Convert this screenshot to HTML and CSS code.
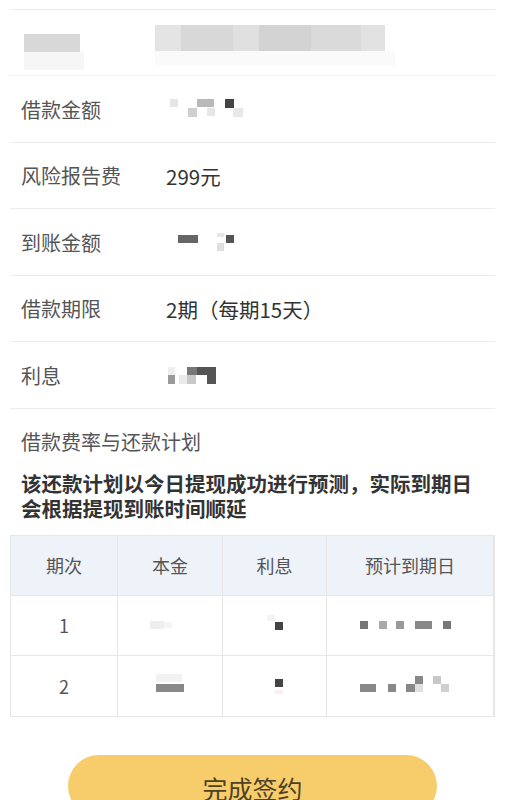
FILE: index.html
```html
<!DOCTYPE html>
<html lang="zh-CN">
<head>
<meta charset="utf-8">
<link rel="stylesheet" href="styles.css">
</head>
<body>
<div class="page">
  <div class="rows">
    <div class="row row-blur">
      <svg class="mz" width="240" height="60" viewBox="0 0 240 60">
        <rect x="0" y="22" width="56" height="18" fill="#d8d8d8"/>
        <rect x="0" y="40" width="60" height="18" fill="#f6f6f6"/>
      </svg>
      <svg class="mz2" width="240" height="40" viewBox="0 0 240 40">
        <rect x="0" y="0" width="26" height="26" fill="#e4e4e4"/>
        <rect x="26" y="0" width="52" height="26" fill="#d8d8d8"/>
        <rect x="78" y="0" width="26" height="26" fill="#e0e0e0"/>
        <rect x="104" y="0" width="52" height="26" fill="#d3d3d3"/>
        <rect x="156" y="0" width="50" height="26" fill="#dadada"/>
        <rect x="206" y="0" width="24" height="26" fill="#e2e2e2"/>
        <rect x="0" y="26" width="240" height="14" fill="#fafafa"/>
      </svg>
    </div>
    <div class="row">
      <span class="label">借款金额</span>
      <svg class="val-mz" width="80" height="22" viewBox="0 0 80 22">
        <rect x="4" y="0" width="8" height="8" fill="#e6e6e6"/>
        <rect x="31" y="0" width="17" height="8" fill="#b9b9b9"/>
        <rect x="59" y="0" width="9" height="9" fill="#444"/>
        <rect x="22" y="9" width="9" height="9" fill="#cfcfcf"/>
        <rect x="41" y="9" width="8" height="8" fill="#e6e6e6"/>
        <rect x="67" y="9" width="10" height="9" fill="#e8e8e8"/>
      </svg>
    </div>
    <div class="row">
      <span class="label">风险报告费</span>
      <span class="value">299元</span>
    </div>
    <div class="row">
      <span class="label">到账金额</span>
      <svg class="val-mz" width="80" height="22" viewBox="0 0 80 22">
        <rect x="12" y="3" width="20" height="8" fill="#666"/>
        <rect x="51" y="1" width="7" height="4" fill="#e6e6e6"/>
        <rect x="60" y="3" width="8" height="8" fill="#555"/>
        <rect x="51" y="11" width="7" height="8" fill="#e0e0e0"/>
      </svg>
    </div>
    <div class="row">
      <span class="label">借款期限</span>
      <span class="value">2期（每期15天）</span>
    </div>
    <div class="row">
      <span class="label">利息</span>
      <svg class="val-mz" width="80" height="22" viewBox="0 0 80 22">
        <rect x="2" y="2" width="7" height="8" fill="#eee"/>
        <rect x="2" y="10" width="7" height="9" fill="#999"/>
        <rect x="13" y="10" width="8" height="9" fill="#eaeaea"/>
        <rect x="21" y="2" width="10" height="8" fill="#777"/>
        <rect x="31" y="2" width="19" height="8" fill="#555"/>
        <rect x="21" y="10" width="9" height="9" fill="#c8c8c8"/>
        <rect x="41" y="10" width="9" height="9" fill="#555"/>
      </svg>
    </div>
  </div>

  <div class="section-title">借款费率与还款计划</div>
  <div class="notice">该还款计划以今日提现成功进行预测，实际到期日会根据提现到账时间顺延</div>

  <div class="table">
    <div class="cell head">期次</div>
    <div class="cell head">本金</div>
    <div class="cell head">利息</div>
    <div class="cell head">预计到期日</div>

    <div class="cell">1</div>
    <div class="cell">
      <svg width="40" height="12" viewBox="0 0 40 12"><rect x="0" y="2" width="14" height="8" fill="#eeeeee"/><rect x="14" y="3" width="8" height="6" fill="#f5f5f5"/></svg>
    </div>
    <div class="cell">
      <svg width="20" height="20" viewBox="0 0 20 20"><rect x="2" y="0" width="8" height="6" fill="#f3f3f3"/><rect x="10" y="7" width="8" height="8" fill="#444"/></svg>
    </div>
    <div class="cell">
      <svg width="100" height="14" viewBox="0 0 100 14"><rect x="0" y="3" width="8" height="8" fill="#777"/><rect x="19" y="3" width="8" height="8" fill="#aaa"/><rect x="36" y="3" width="8" height="8" fill="#999"/><rect x="55" y="3" width="17" height="8" fill="#888"/><rect x="83" y="3" width="8" height="8" fill="#777"/></svg>
    </div>

    <div class="cell">2</div>
    <div class="cell">
      <svg width="40" height="24" viewBox="0 0 40 24"><rect x="6" y="0" width="26" height="8" fill="#f2f2f2"/><rect x="6" y="10" width="28" height="8" fill="#888"/></svg>
    </div>
    <div class="cell">
      <svg width="20" height="20" viewBox="0 0 20 20"><rect x="10" y="3" width="8" height="8" fill="#444"/><rect x="10" y="14" width="8" height="4" fill="#fbeeee"/></svg>
    </div>
    <div class="cell">
      <svg width="100" height="24" viewBox="0 0 100 24"><rect x="0" y="10" width="16" height="8" fill="#888"/><rect x="28" y="10" width="8" height="8" fill="#888"/><rect x="46" y="10" width="9" height="8" fill="#888"/><rect x="55" y="2" width="8" height="8" fill="#888"/><rect x="73" y="2" width="8" height="8" fill="#c8c8c8"/><rect x="81" y="10" width="8" height="8" fill="#cfcfcf"/><rect x="55" y="10" width="8" height="8" fill="#e0e0e0"/></svg>
    </div>
  </div>

  <div class="btn-wrap">
    <div class="btn">完成签约</div>
  </div>
</div>
</body>
</html>
```
FILE: styles.css
```css
html, body {
  margin: 0;
  padding: 0;
  background: #ffffff;
}
body {
  font-family: "Noto Sans CJK SC", "Noto Sans", sans-serif;
  color: #333;
  width: 513px;
  overflow: hidden;
}
.page {
  padding: 9px 18px 0 10px;
}
.rows {
  border-top: 1px solid #ececec;
}
.row {
  height: 63.5px;
  border-bottom: 1px solid #ececec;
  display: flex;
  align-items: center;
  padding-left: 11px;
  padding-top: 2px;
  box-sizing: content-box;
}
.row-blur {
  position: relative;
  height: 63px;
  border-bottom-color: #f2f2f2;
}
.mz {
  position: absolute;
  left: 14px;
  top: 2px;
}
.mz2 {
  position: absolute;
  left: 145px;
  top: 15px;
}
.label {
  width: 145px;
  font-size: 20px;
  color: #555;
  line-height: 24px;
}
.value {
  font-size: 20.5px;
  color: #333;
  line-height: 24px;
}
.section-title {
  font-size: 20px;
  color: #555;
  padding: 20px 0 0 11px;
  line-height: 26px;
}
.notice {
  font-size: 20.5px;
  font-weight: bold;
  color: #333;
  padding: 16px 20px 0 11px;
  line-height: 25px;
}
.table {
  margin-top: 14px;
  display: grid;
  grid-template-columns: 107px 105px 104px 1fr;
  grid-template-rows: 60px 60px 60px;
  border: 1px solid #e6e6e6;
  border-right-width: 2px;
}
.cell {
  display: flex;
  align-items: center;
  justify-content: center;
  border-right: 1px solid #e6e6e6;
  border-bottom: 1px solid #e6e6e6;
  font-size: 18px;
  color: #555;
}
.cell:nth-child(4n) {
  border-right: none;
}
.cell:nth-last-child(-n+4) {
  border-bottom: none;
}
.head {
  background: #eef2f9;
  color: #555;
}
.btn-wrap {
  display: flex;
  padding-top: 38px;
  padding-left: 58px;
}
.btn {
  width: 369px;
  height: 62px;
  border-radius: 31px;
  background: #f7cd6b;
  color: #4e4126;
  font-size: 25px;
  display: flex;
  align-items: center;
  justify-content: center;
  padding-top: 4px;
  box-sizing: border-box;
}
```
